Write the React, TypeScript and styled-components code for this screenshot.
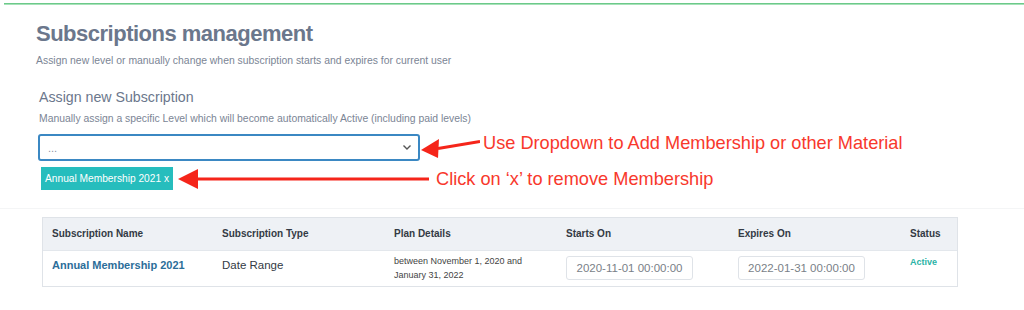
import React from "react";
import styled, { createGlobalStyle } from "styled-components";

const GlobalStyle = createGlobalStyle`
  html, body { margin: 0; padding: 0; background: #ffffff; }
  body { font-family: "Liberation Sans", Arial, sans-serif; }
  * { box-sizing: border-box; }
`;

const Page = styled.div`
  width: 1024px;
  height: 310px;
  overflow: hidden;
  background: #fff;
`;

const TopRule = styled.div`
  margin: 3px 0 0 4px;
  height: 2px;
  background: #6cc98a;
  border-bottom: 1px solid #a7e2b9;
`;

const Header = styled.header`
  padding: 14px 0 0 36px;
`;

const Title = styled.h1`
  margin: 0;
  font-size: 22px;
  letter-spacing: -0.5px;
  font-weight: 700;
  color: #6b778c;
  line-height: 30px;
`;

const Lead = styled.p`
  margin: 6px 0 0;
  font-size: 10.4px;
  color: #7b8595;
  line-height: 12px;
`;

const Section = styled.section`
  padding: 21px 0 0 39px;
`;

const SectionTitle = styled.h2`
  margin: 0;
  font-size: 14.2px;
  font-weight: 400;
  color: #6b778c;
  line-height: 18px;
`;

const Hint = styled.p`
  margin: 7px 0 0;
  font-size: 10.4px;
  color: #7b8595;
  line-height: 12px;
`;

const ControlRow = styled.div`
  display: flex;
  align-items: center;
  margin-top: 9px;
  margin-left: -1px;
  height: 27px;
`;

const Select = styled.div`
  width: 382px;
  height: 27px;
  border: 2px solid #3b88c3;
  border-radius: 3px;
  display: flex;
  align-items: center;
  justify-content: space-between;
  padding: 0 6px 0 8px;
  font-size: 11px;
  color: #8a93a3;
`;

const Annotation = styled.span<{ $lift?: number }>`
  font-size: 18.2px;
  color: #f8382c;
  white-space: nowrap;
  line-height: 20px;
  margin-bottom: ${(p) => p.$lift ?? 0}px;
`;

const TagRow = styled.div`
  display: flex;
  align-items: center;
  margin-top: 6px;
  margin-left: 2px;
  height: 23px;
`;

const Tag = styled.span`
  display: inline-flex;
  align-items: center;
  height: 23px;
  padding: 0 4px;
  background: #26bdbd;
  color: #fff;
  font-size: 10.2px;
  white-space: nowrap;
`;

const Divider = styled.div`
  margin: 18px 0 0 0;
  height: 1px;
  background: #f4f5f6;
`;

const TableWrap = styled.div`
  margin: 8px 0 0 42px;
  width: 916px;
  border: 1px solid #dfe3e8;
`;

const Table = styled.table`
  width: 100%;
  border-collapse: collapse;
  table-layout: fixed;
`;

const Th = styled.th<{ $w?: number }>`
  ${(p) => (p.$w ? `width: ${p.$w}px;` : "")}
  height: 32px;
  background: #eef1f5;
  text-align: left;
  font-size: 10px;
  font-weight: 700;
  color: #333a44;
  padding: 0 0 0 9px;
  border-bottom: 1px solid #e3e7ec;
`;

const Td = styled.td`
  height: 36px;
  vertical-align: top;
  padding: 5px 0 0 9px;
  font-size: 11.5px;
  color: #333a44;
`;

const NameLink = styled.a`
  display: block;
  padding-top: 3px;
  color: #2c6e99;
  font-weight: 700;
  font-size: 11px;
  text-decoration: none;
`;

const PlainCell = styled.span`
  display: block;
  padding-top: 3px;
`;

const Plan = styled.span`
  display: block;
  margin-top: -2px;
  font-size: 9px;
  line-height: 14px;
  color: #444;
`;

const DateInput = styled.div`
  width: 127px;
  height: 24px;
  border: 1px solid #dfe3e8;
  border-radius: 3px;
  display: flex;
  align-items: center;
  justify-content: center;
  font-size: 11.5px;
  color: #7a7f88;
`;

const Status = styled.span`
  display: block;
  padding-top: 1px;
  font-size: 9px;
  font-weight: 700;
  color: #2ab3a6;
`;

const Chevron = () => (
  <svg width="10" height="7" viewBox="0 0 10 7">
    <path d="M1.5 1.5 L5 5 L8.5 1.5" fill="none" stroke="#555" strokeWidth="1.4" />
  </svg>
);

const Arrow = styled.svg<{ $gap?: number; $after?: number }>`
  flex: none;
  display: block;
  margin-left: ${(p) => p.$gap ?? 0}px;
  margin-right: ${(p) => p.$after ?? 3}px;
`;

export default function App() {
  return (
    <Page>
      <GlobalStyle />
      <TopRule />
      <Header>
        <Title>Subscriptions management</Title>
        <Lead>Assign new level or manually change when subscription starts and expires for current user</Lead>
      </Header>
      <Section>
        <SectionTitle>Assign new Subscription</SectionTitle>
        <Hint>Manually assign a specific Level which will become automatically Active (including paid levels)</Hint>
        <ControlRow>
          <Select>
            <span>...</span>
            <Chevron />
          </Select>
          <Arrow width="60" height="27" viewBox="0 0 60 27">
            <path d="M18 14.5 L60 7.5" stroke="#f5251a" strokeWidth="3" fill="none" />
            <polygon points="1,16 19,5 18,24" fill="#f5251a" />
          </Arrow>
          <Annotation $lift={10}>Use Dropdown to Add Membership or other Material</Annotation>
        </ControlRow>
        <TagRow>
          <Tag>Annual Membership 2021 x</Tag>
          <Arrow $gap={4} $after={7} width="252" height="24" viewBox="0 0 252 24">
            <path d="M20 12 L252 12" stroke="#f5251a" strokeWidth="3" fill="none" />
            <polygon points="1,12 21,2 21,22" fill="#f5251a" />
          </Arrow>
          <Annotation>Click on ‘x’ to remove Membership</Annotation>
        </TagRow>
      </Section>
      <Divider />
      <TableWrap>
        <Table>
          <thead>
            <tr>
              <Th $w={170}>Subscription Name</Th>
              <Th $w={172}>Subscription Type</Th>
              <Th $w={172}>Plan Details</Th>
              <Th $w={172}>Starts On</Th>
              <Th $w={172}>Expires On</Th>
              <Th>Status</Th>
            </tr>
          </thead>
          <tbody>
            <tr>
              <Td><NameLink href="#">Annual Membership 2021</NameLink></Td>
              <Td><PlainCell>Date Range</PlainCell></Td>
              <Td><Plan>between November 1, 2020 and<br />January 31, 2022</Plan></Td>
              <Td><DateInput>2020-11-01 00:00:00</DateInput></Td>
              <Td><DateInput>2022-01-31 00:00:00</DateInput></Td>
              <Td><Status>Active</Status></Td>
            </tr>
          </tbody>
        </Table>
      </TableWrap>
    </Page>
  );
}
